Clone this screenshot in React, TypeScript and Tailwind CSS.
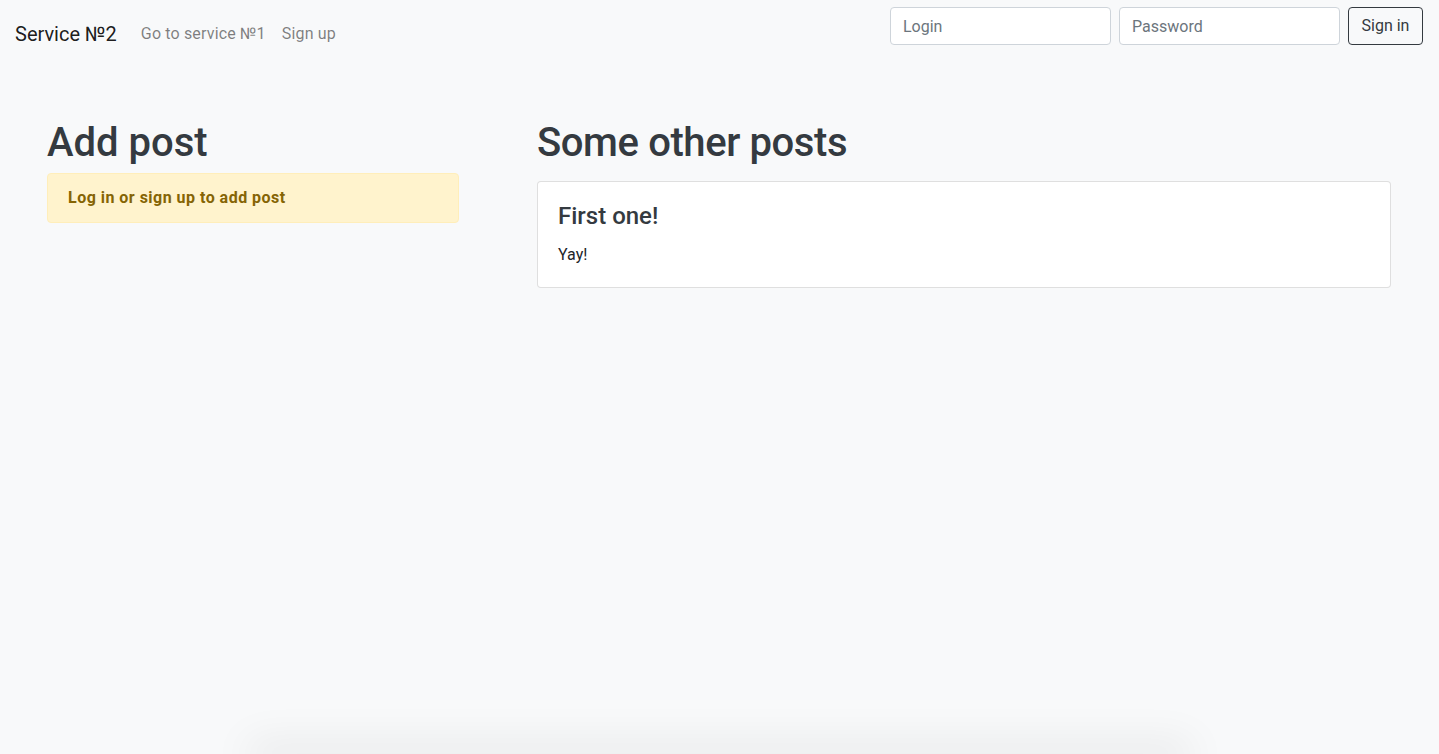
export default function App() {
  return (
    <div className="h-[754px] overflow-hidden bg-[#f8f9fa] flex flex-col font-['Roboto','Liberation_Sans',sans-serif] text-[#212529]">
      {/* Navbar */}
      <nav className="flex justify-between items-start pl-[15px] pr-4 pt-[7px]">
        <div className="flex items-center mt-[12px] h-[30px]">
          <a className="text-[20px] text-black/90 mr-4 leading-[30px]">Service №2</a>
          <a className="px-2 text-[16px] text-black/50 tracking-[0.01em]">Go to service №1</a>
          <a className="px-2 text-[16px] text-black/50 tracking-[0.01em]">Sign up</a>
        </div>
        <form className="flex items-center">
          <input
            placeholder="Login"
            className="w-[221px] h-[38px] mr-2 px-3 rounded border border-[#ced4da] bg-white text-[16px] placeholder:text-[#6c757d] outline-none"
          />
          <input
            type="password"
            placeholder="Password"
            className="w-[221px] h-[38px] mr-2 px-3 rounded border border-[#ced4da] bg-white text-[16px] placeholder:text-[#6c757d] outline-none"
          />
          <button type="button" className="h-[38px] w-[75px] rounded border border-[#343a40] text-[#343a40] text-[16px]">
            Sign in
          </button>
        </form>
      </nav>

      {/* Content */}
      <div className="flex pl-[47px] pt-[68px] gap-[78px]">
        <div className="w-[412px]">
          <h1 className="text-[40px] leading-[48px] font-medium text-[#343a40] mt-[2px] mb-[6px]">Add post</h1>
          <div className="bg-[#fff3cd] border border-[#ffeeba] rounded px-5 py-3 text-[#856404] font-bold text-[16px] leading-6 tracking-[0.03em]">
            Log in or sign up to add post
          </div>
        </div>
        <div className="w-[854px]">
          <h1 className="text-[40px] leading-[48px] font-medium text-[#343a40] mt-[2px] mb-[14px] tracking-[-0.01em]">Some other posts</h1>
          <div className="bg-white border border-black/[.125] rounded p-5">
            <h4 className="text-[24px] leading-[29px] font-medium text-[#343a40] mb-3">First one!</h4>
            <p className="text-[16px] leading-6">Yay!</p>
          </div>
        </div>
      </div>

      {/* footer shadow peeking from below */}
      <div className="mt-auto h-0 mx-auto w-[920px] shadow-[0_0_40px_12px_rgba(0,0,0,0.08)]" />
    </div>
  )
}
